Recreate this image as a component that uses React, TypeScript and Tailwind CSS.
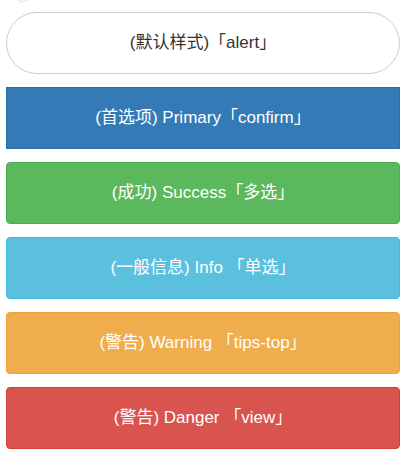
const buttons = [
  { label: '(首选项) Primary「confirm」', cls: 'rounded-none bg-[#337ab7] border-[#2e6da4]' },
  { label: '(成功) Success「多选」', cls: 'rounded-[4px] bg-[#5cb85c] border-[#4cae4c]' },
  { label: '(一般信息) Info 「单选」', cls: 'rounded-[4px] bg-[#5bc0de] border-[#46b8da]' },
  { label: '(警告) Warning 「tips-top」', cls: 'rounded-[4px] bg-[#f0ad4e] border-[#eea236]' },
  { label: '(警告) Danger 「view」', cls: 'rounded-[4px] bg-[#d9534f] border-[#d43f3a]' },
];

export default function App() {
  return (
    <div className="h-[453px] overflow-hidden bg-white px-[6px] font-['Liberation_Sans','Noto_Sans_CJK_SC',sans-serif] text-[17px]">
      {/* bottom edge of an element above, scrolled out of view */}
      <div className="-mt-[20px] ml-[6px] h-[22px] w-[22px] rounded-full border border-[#e2e2e2]" />
      <div className="mt-[10px] flex flex-col gap-[13px]">
        <button className="flex h-[62px] w-full items-center justify-center rounded-full border border-[#cccccc] bg-white text-[#333]">
          (默认样式)「alert」
        </button>
        {buttons.map((b) => (
          <button
            key={b.label}
            className={`flex h-[62px] w-full items-center justify-center border text-white ${b.cls}`}
          >
            {b.label}
          </button>
        ))}
      </div>
    </div>
  );
}
